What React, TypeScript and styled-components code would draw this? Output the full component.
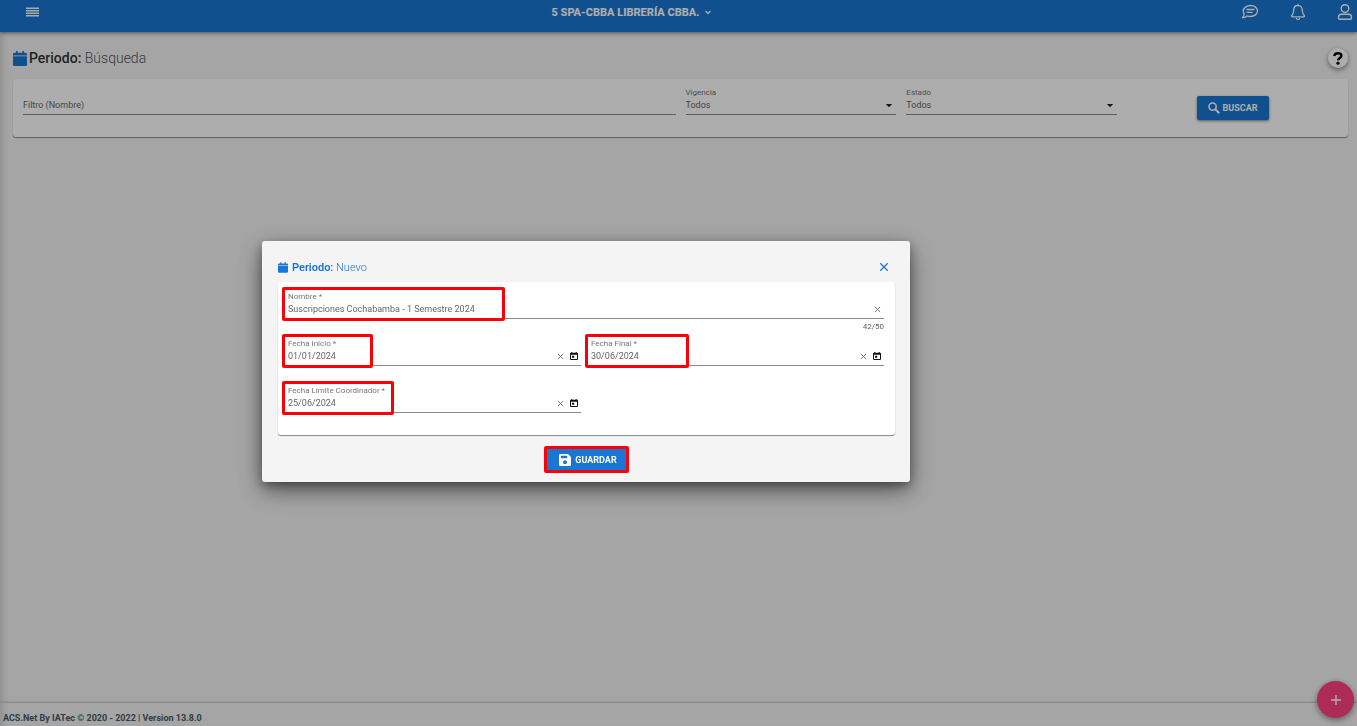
import React, { useState } from "react";
import styled, { createGlobalStyle, css } from "styled-components";

const BLUE = "#1976d2";

const GlobalStyle = createGlobalStyle`
  *, *::before, *::after { box-sizing: border-box; }
  body {
    margin: 0;
    background: #f4f4f4;
    font-family: Roboto, "Liberation Sans", sans-serif;
    font-size: 9px;
    color: #666;
  }
  button, input, select { font: inherit; color: inherit; }
  button { cursor: pointer; }
`;

const Page = styled.div`
  display: flex;
  flex-direction: column;
  min-height: 100vh;
  box-shadow: inset 8px 0 8px -6px rgba(0, 0, 0, 0.16);
`;

const TopBar = styled.header`
  display: grid;
  grid-template-columns: 1fr auto 1fr;
  align-items: start;
  height: 32px;
  padding: 3px 4px 0 26px;
  background: ${BLUE};
  color: #fff;
  box-shadow: 0 1px 4px rgba(0, 0, 0, 0.5);
`;

const BareButton = styled.button`
  display: inline-flex;
  align-items: center;
  justify-content: center;
  padding: 0;
  border: 0;
  background: none;
`;

const MenuButton = styled(BareButton)`
  justify-self: start;
  height: 18px;
`;

const BranchButton = styled(BareButton)`
  gap: 5px;
  height: 18px;
  padding-right: 115px;
  font-size: 11px;
  font-weight: 800;
`;

const TopActions = styled.nav`
  display: flex;
  justify-content: flex-end;
  gap: 31px;
  height: 18px;
`;

const Main = styled.main`
  flex: 1;
  padding: 14px 9px 0 13px;
`;

const TitleRow = styled.div`
  display: flex;
  align-items: center;
  justify-content: space-between;
  height: 24px;
`;

const Title = styled.h1`
  display: flex;
  align-items: center;
  gap: 2px;
  margin: 0;
  font-size: 14px;
  line-height: 20px;
  font-weight: 300;
  color: #555;
  svg { color: ${BLUE}; }
  strong { font-weight: 500; color: #333; }
`;

const HelpButton = styled(BareButton)`
  width: 20px;
  height: 20px;
  border-radius: 50%;
  background: #fff;
  box-shadow: 0 2px 5px rgba(0, 0, 0, 0.45);
  color: #000;
`;

const Card = styled.section`
  border-radius: 3px;
  background: #fff;
  box-shadow: 0 1px 1px rgba(0, 0, 0, 0.45);
`;

const SearchCard = styled(Card)`
  display: grid;
  grid-template-columns: repeat(12, 1fr);
  gap: 10px;
  align-items: start;
  margin-top: 9px;
  padding: 7px 10px 4px;
  min-height: 58px;
`;

const Field = styled.div<{ $span?: number; $mark?: number }>`
  position: relative;
  grid-column: span ${(p) => p.$span ?? 1};
  display: flex;
  flex-direction: column;
  min-width: 0;
  ${(p) =>
    p.$mark &&
    css`
      &::after {
        content: "";
        position: absolute;
        top: -3px;
        left: -6px;
        width: ${p.$mark}px;
        height: 34px;
        border: 3px solid #fb0007;
        border-radius: 2px;
        pointer-events: none;
      }
    `}
`;

const Label = styled.label`
  height: 12px;
  font-size: 8px;
  line-height: 13px;
  color: #777;
`;

const Control = styled.div`
  display: flex;
  align-items: center;
  gap: 6px;
  height: 17px;
  padding: 0 3px 2px 0;
  border-bottom: 1px solid #8a8a8a;
`;

const TextInput = styled.input`
  flex: 1;
  min-width: 0;
  height: 14px;
  padding: 0;
  border: 0;
  outline: 0;
  background: none;
  line-height: 14px;
  &::placeholder { color: #666; opacity: 1; }
`;

const Select = styled.select`
  flex: 1;
  height: 14px;
  padding: 0;
  border: 0;
  outline: 0;
  appearance: none;
  background: none;
`;

const Helper = styled.div`
  height: 18px;
  font-size: 8px;
  line-height: 15px;
  text-align: right;
`;

const IconButton = styled(BareButton)`
  width: 8px;
  height: 14px;
`;

const PrimaryButton = styled.button`
  display: inline-flex;
  align-items: center;
  justify-content: center;
  gap: 3px;
  height: 24px;
  padding: 0 11px;
  border: 0;
  border-radius: 2px;
  background: ${BLUE};
  box-shadow: 0 1px 3px rgba(0, 0, 0, 0.5);
  color: #fff;
  font-size: 9px;
  font-weight: 700;
`;

const SearchAction = styled.div`
  grid-column: span 2;
  display: flex;
  justify-content: center;
  padding-top: 10px;
`;

const Footer = styled.footer`
  height: 24px;
  padding-left: 3px;
  border-top: 1px solid #cfcfcf;
  box-shadow: 0 -1px 1px rgba(0, 0, 0, 0.08);
  font-size: 9px;
  font-weight: 700;
  line-height: 31px;
  color: #4a5964;
`;

const AddButton = styled(BareButton)`
  position: fixed;
  right: 3px;
  bottom: 8px;
  width: 37px;
  height: 37px;
  border-radius: 50%;
  background: #ff4081;
  box-shadow: 0 2px 6px rgba(0, 0, 0, 0.45);
  color: #fff;
`;

const Backdrop = styled.div`
  position: fixed;
  inset: 0;
  display: flex;
  align-items: center;
  justify-content: center;
  padding: 0 185px 3px 0;
  background: rgba(0, 0, 0, 0.32);
`;

const Dialog = styled.form`
  width: 648px;
  max-width: 100%;
  padding: 16px 15px 9px 16px;
  border-radius: 3px;
  background: #f4f4f4;
  box-shadow: 0 8px 24px rgba(0, 0, 0, 0.5), 0 4px 10px rgba(0, 0, 0, 0.3);
`;

const DialogHeader = styled.div`
  display: flex;
  align-items: center;
  justify-content: space-between;
  height: 20px;
  padding-right: 6px;
  color: ${BLUE};
`;

const DialogTitle = styled.h2`
  display: flex;
  align-items: center;
  gap: 4px;
  margin: 0;
  font-size: 11px;
  font-weight: 300;
  strong { font-weight: 600; }
`;

const FormCard = styled(Card)`
  display: grid;
  grid-template-columns: 1fr 1fr;
  column-gap: 10px;
  margin-top: 5px;
  padding: 8px 11px 4px 10px;
`;

const DialogActions = styled.div`
  display: flex;
  justify-content: center;
  padding-top: 11px;
`;

const SaveButton = styled(PrimaryButton)`
  gap: 4px;
  height: 27px;
  padding: 0 9px 0 12px;
  border: 3px solid #fb0007;
  box-shadow: none;
`;

const CalendarIcon = ({ size }: { size: number }) => (
  <svg width={size} height={size + 1} viewBox="0 0 14 15" fill="currentColor" aria-hidden="true">
    <path d="M1.500 1.800H3V.5Q3 0 3.500 0h.8q.5 0 .5.5v1.300h4.400V.5Q9.200 0 9.700 0h.8q.5 0 .5.5v1.300h1.500Q14 1.800 14 3.200v1.300H0V3.200Q0 1.800 1.500 1.800zM0 5.200h14v8.300Q14 15 12.500 15h-11Q0 15 0 13.500z" />
  </svg>
);

const CrossIcon = ({ size }: { size: number }) => (
  <svg width={size} height={size} viewBox="0 0 8 8" stroke="currentColor" fill="none" aria-hidden="true">
    <path d="M1 1l6 6M7 1L1 7" />
  </svg>
);

const PickerIcon = () => (
  <svg width="8" height="8" viewBox="0 0 8 8" fill="#111" aria-hidden="true">
    <path fillRule="evenodd" d="M1.300 0h1v.7h3.400V0h1v.7H7q1 0 1 1V7q0 1-1 1H1Q0 8 0 7V1.700q0-1 1-1h.3zM1 2.700v4.300h6V2.700zM2 3.700h2.200v2H2z" />
  </svg>
);

const Caret = () => (
  <svg width="8" height="5" viewBox="0 0 8 5" fill="#222" aria-hidden="true">
    <path d="M.8 1h6.400L4 4.300z" />
  </svg>
);

interface SelectFieldProps { id: string; label: string }

const SelectField = ({ id, label }: SelectFieldProps) => (
  <Field $span={2}>
    <Label htmlFor={id}>{label}</Label>
    <Control>
      <Select id={id}><option>Todos</option></Select>
      <Caret />
    </Control>
  </Field>
);

interface EntryProps {
  id: string;
  label: string;
  initial: string;
  mark: number;
  span?: number;
  date?: boolean;
  max?: number;
}

const Entry = ({ id, label, initial, mark, span, date, max }: EntryProps) => {
  const [value, setValue] = useState(initial);
  return (
    <Field $mark={mark} $span={span}>
      <Label htmlFor={id}>{label} *</Label>
      <Control>
        <TextInput id={id} value={value} maxLength={max} onChange={(e) => setValue(e.target.value)} />
        <IconButton type="button" aria-label={`Limpiar ${label}`} onClick={() => setValue("")}>
          <CrossIcon size={7} />
        </IconButton>
        {date ? (
          <IconButton type="button" aria-label={`Elegir ${label}`}><PickerIcon /></IconButton>
        ) : null}
      </Control>
      <Helper>{max ? `${value.length}/${max}` : null}</Helper>
    </Field>
  );
};

export default function App() {
  return (
    <>
      <GlobalStyle />
      <Page>
        <TopBar>
          <MenuButton aria-label="Menú">
            <svg width="13" height="10" viewBox="0 0 13 10" fill="currentColor">
              <path d="M0 .5h13v1.500H0zM0 3h13v1.500H0zM0 5.500h13V7H0zM0 8h13v1.500H0z" />
            </svg>
          </MenuButton>
          <BranchButton>
            5 SPA-CBBA LIBRERÍA CBBA.
            <svg width="8" height="8" viewBox="0 0 8 8" fill="none" stroke="currentColor" strokeWidth="1.300">
              <path d="M1.500 3L4 5.500 6.500 3" />
            </svg>
          </BranchButton>
          <TopActions>
            <BareButton aria-label="Mensajes">
              <svg width="18" height="16" viewBox="0 0 18 16" fill="none" stroke="currentColor" strokeWidth="1.300" strokeLinecap="round" strokeLinejoin="round">
                <path d="M9.500 1.500c4 0 7 2.500 7 5.500s-3 5.500-7 5.500c-1.200 0-2.300-.2-3.300-.6-1.100.9-2.700 1.800-4.700 1.800 1-1 1.600-2 1.700-3.400C2.700 9.500 2.300 8.300 2.300 7c0-3 3.200-5.500 7.200-5.500zM6 5.500h7M6 8.300h5" />
              </svg>
            </BareButton>
            <BareButton aria-label="Notificaciones">
              <svg width="16" height="18" viewBox="0 0 16 18" fill="none" stroke="currentColor" strokeWidth="1.300" strokeLinecap="round" strokeLinejoin="round">
                <path d="M8 1.300v1.200M8 2.500c-2.700 0-4.300 2-4.300 4.500 0 3.700-1 4.500-1.900 5.500-.5.700-.2 1.300.6 1.300h11.200c.8 0 1.100-.6.600-1.300-.9-1-1.900-1.800-1.900-5.500 0-2.500-1.600-4.500-4.300-4.500zM6.500 15.700c.5 1 2.500 1 3 0" />
              </svg>
            </BareButton>
            <BareButton aria-label="Usuario">
              <svg width="16" height="18" viewBox="0 0 16 18" fill="none" stroke="currentColor" strokeWidth="1.400">
                <circle cx="8" cy="5.500" r="3.800" />
                <path d="M4.500 11.300h7c1.900 0 3 1.300 3 3v.8q0 1.200-1.200 1.200H2.700q-1.200 0-1.200-1.200v-.8c0-1.700 1.100-3 3-3z" />
              </svg>
            </BareButton>
          </TopActions>
        </TopBar>
        <Main>
          <TitleRow>
            <Title>
              <CalendarIcon size={14} />
              <span><strong>Periodo:</strong> Búsqueda</span>
            </Title>
            <HelpButton aria-label="Ayuda">
              <svg width="10" height="14" viewBox="0 0 10 14" fill="none" stroke="currentColor" strokeWidth="2.400">
                <path d="M1.200 5C1.500 2.900 3 2.200 4.900 2.200c2.100 0 3.500.9 3.500 2.500 0 2.200-3.300 2.200-3.300 4.500" />
                <circle cx="5" cy="12.200" r="1.600" fill="currentColor" stroke="none" />
              </svg>
            </HelpButton>
          </TitleRow>
          <SearchCard>
            <Field $span={6}>
              <Label htmlFor="filtro" />
              <Control>
                <TextInput id="filtro" aria-label="Filtro (Nombre)" placeholder="Filtro (Nombre)" />
              </Control>
            </Field>
            <SelectField id="vigencia" label="Vigencia" />
            <SelectField id="estado" label="Estado" />
            <SearchAction>
              <PrimaryButton>
                <svg width="12" height="12" viewBox="0 0 12 12" fill="none" stroke="currentColor">
                  <circle cx="4.600" cy="4.600" r="3.600" strokeWidth="1.600" />
                  <path d="M7.300 7.300l4 4" strokeWidth="2" />
                </svg>
                BUSCAR
              </PrimaryButton>
            </SearchAction>
          </SearchCard>
        </Main>
        <Footer>ACS.Net By IATec © 2020 - 2022 | Version 13.8.0</Footer>
        <AddButton aria-label="Agregar">
          <svg width="10" height="10" viewBox="0 0 10 10" stroke="currentColor" strokeWidth="1.400">
            <path d="M5 0v10M0 5h10" />
          </svg>
        </AddButton>
      </Page>
      <Backdrop>
        <Dialog role="dialog" aria-labelledby="dialog-title" onSubmit={(e) => e.preventDefault()}>
          <DialogHeader>
            <DialogTitle id="dialog-title">
              <CalendarIcon size={10} />
              <span><strong>Periodo:</strong> Nuevo</span>
            </DialogTitle>
            <BareButton type="button" aria-label="Cerrar"><CrossIcon size={10} /></BareButton>
          </DialogHeader>
          <FormCard>
            <Entry id="nombre" label="Nombre" initial="Suscripciones Cochabamba - 1 Semestre 2024" mark={223} span={2} max={50} />
            <Entry id="inicio" label="Fecha Inicio" initial="01/01/2024" mark={91} date />
            <Entry id="final" label="Fecha Final" initial="30/06/2024" mark={104} date />
            <Entry id="limite" label="Fecha Límite Coordinador" initial="25/06/2024" mark={112} date />
          </FormCard>
          <DialogActions>
            <SaveButton type="submit">
              <svg width="12" height="12" viewBox="0 0 12 12" fill="currentColor">
                <path fillRule="evenodd" d="M1.300 0H9l3 3v7.700q0 1.300-1.300 1.300H1.300Q0 12 0 10.700V1.300Q0 0 1.300 0zM1.800 1.700v2.600h6.400V1.700zM6 6.200a2 2 0 100 4 2 2 0 000-4z" />
              </svg>
              GUARDAR
            </SaveButton>
          </DialogActions>
        </Dialog>
      </Backdrop>
    </>
  );
}
